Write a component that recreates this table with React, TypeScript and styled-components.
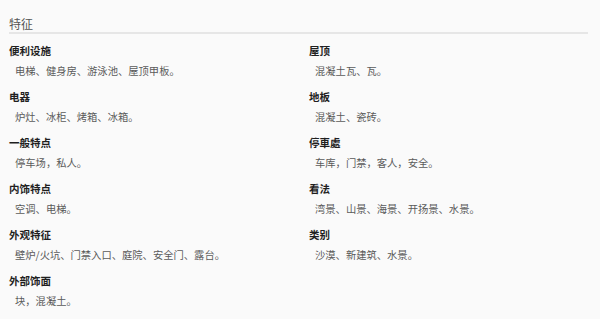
import React from 'react'
import styled, { createGlobalStyle } from "styled-components";

const GlobalStyle = createGlobalStyle`
    html, body {
        margin: 0;
        padding: 0;
        background: #fafafa;
    }
    body {
        font-family: "Noto Sans CJK SC", "Noto Sans", sans-serif;
    }
`;

type Feature = { label: string; value: string };

const leftFeatures: Feature[] = [
    { label: '便利设施', value: '电梯、健身房、游泳池、屋顶甲板。' },
    { label: '电器', value: '炉灶、冰柜、烤箱、冰箱。' },
    { label: '一般特点', value: '停车场，私人。' },
    { label: '内饰特点', value: '空调、电梯。' },
    { label: '外观特征', value: '壁炉/火坑、门禁入口、庭院、安全门、露台。' },
    { label: '外部饰面', value: '块，混凝土。' },
];

const rightFeatures: Feature[] = [
    { label: '屋顶', value: '混凝土瓦、瓦。' },
    { label: '地板', value: '混凝土、瓷砖。' },
    { label: '停車處', value: '车库，门禁，客人，安全。' },
    { label: '看法', value: '湾景、山景、海景、开扬景、水景。' },
    { label: '类别', value: '沙漠、新建筑、水景。' },
];

const App = () => {

return (
  <Wrapper>
    <GlobalStyle />
    <Title>特征</Title>
    <Columns>
        {[leftFeatures, rightFeatures].map((list, i) => (
            <Column key={i}>
                {list.map((f) => (
                    <Item key={f.label}>
                        <Label>{f.label}</Label>
                        <Value>{f.value}</Value>
                    </Item>
                ))}
            </Column>
        ))}
    </Columns>
  </Wrapper>
)

};

const Wrapper = styled.div`
    width: 600px;
    height: 319px;
    padding: 0 12px 0 9px;
    box-sizing: border-box;
    background: #fafafa;
    overflow: hidden;
`;
const Title = styled.div`
    padding-top: 16px;
    font-size: 12px;
    line-height: 16px;
    color: #555555;
    border-bottom: 2px solid #e6e6e6;
`;
const Columns = styled.div`
    display: grid;
    grid-template-columns: 300px 1fr;
    margin-top: 9px;
`;
const Column = styled.div`
    display: flex;
    flex-direction: column;
`;
const Item = styled.div`
    display: flex;
    flex-direction: column;
    gap: 4px;
    height: 46px;
`;
const Label = styled.div`
    font-size: 10.5px;
    font-weight: 700;
    line-height: 16px;
    color: #1f1f1f;
`;
const Value = styled.div`
    padding-left: 6px;
    font-size: 10.3px;
    line-height: 16px;
    color: #5a5a5a;
`;

export default App;
